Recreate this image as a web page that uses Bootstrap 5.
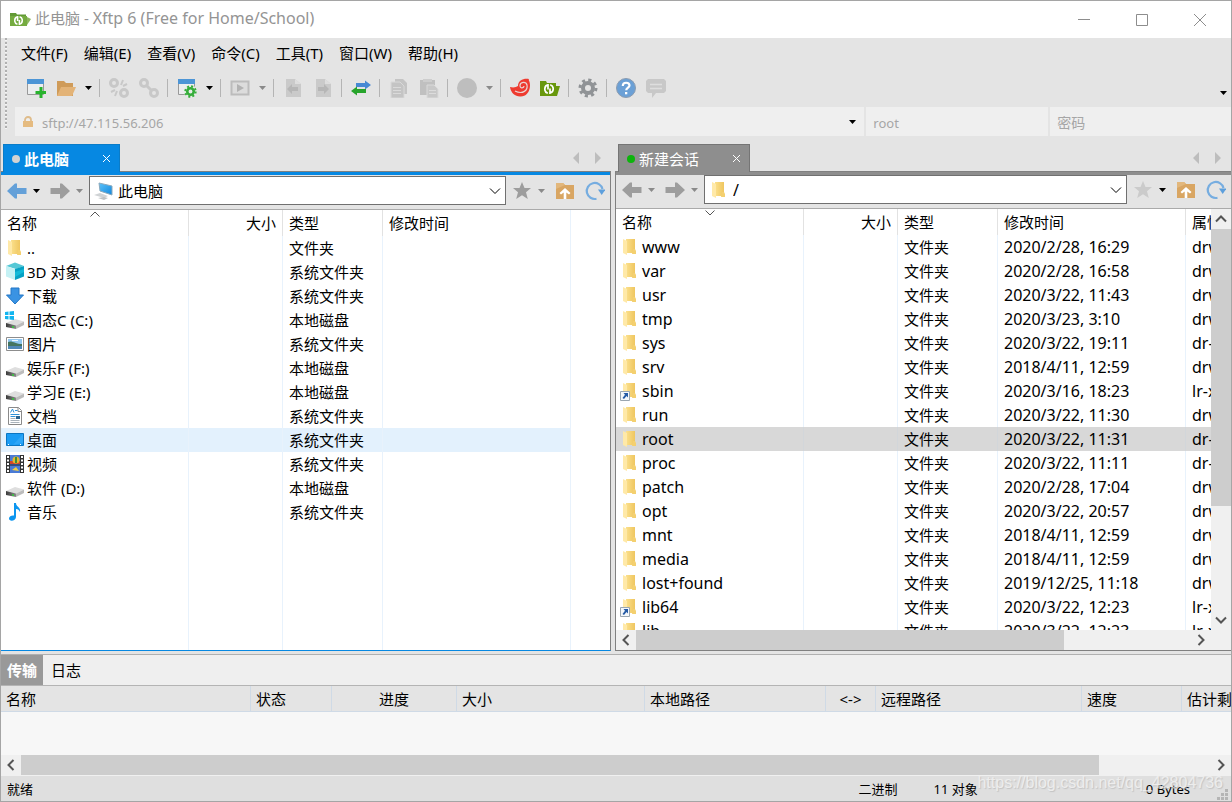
<!DOCTYPE html>
<html lang="zh-CN">
<head>
<meta charset="utf-8">
<meta name="viewport" content="width=device-width, initial-scale=1">
<title>此电脑 - Xftp 6</title>
<link rel="stylesheet" href="https://cdn.jsdelivr.net/npm/bootstrap@5.3.0/dist/css/bootstrap.min.css">
<style>
  body { font: 15px/24px "Noto Sans", "Noto Sans CJK SC", sans-serif; color: #000; background: #e4e4e4; }
  button, input, select { font: inherit; border: 0; background: none; padding: 0; border-radius: 0; }
  svg { display: block; flex: none; }
  .app { border: 1px solid #a5a5a5; }
  .title-bar { height: 37px; background: #fff; color: #949494; padding: 0 2px 0 9px; }
  .win-btn { width: 58px; height: 37px; color: #8d8d8d; }
  .bars { padding-left: 4px; gap: 10px; }
  .grip { width: 2px; margin-bottom: 6px; background: repeating-linear-gradient(#b0b0b0 0 2px, #f4f4f4 2px 3px, transparent 3px 4px); }
  .menus { gap: 16px; height: 30px; padding-left: 4px; }
  .menus a { color: #000; text-decoration: none; }
  .tools { height: 39px; padding-left: 4px; }
  .tool { width: 30px; height: 30px; color: #9d9d9d; }
  .tool.live { color: #64a0d8; }
  .tool.pale { color: #cbcbcb; }
  .drop { width: 15px; height: 30px; color: #000; }
  .drop.off { color: #8a8a8a; }
  .split { width: 8px; height: 18px; background: linear-gradient(90deg, transparent 3px, #b4b4b4 3px 4px, transparent 4px); }
  .quick { gap: 2px; height: 29px; margin-left: -2px; }
  .field { background: #efefef; color: #a6a6a6; padding-left: 7px; font-size: 13px; }
  .field input { outline: 0; color: #a6a6a6; min-width: 0; padding-top: 2px; }
  .field input::placeholder { color: #a6a6a6; opacity: 1; }
  .f-host { flex: 843 1 0; }
  .f-user { flex: 175 1 0; }
  .f-pass { flex: 174 1 0; font-size: 14px; }
  .work { gap: 4px; padding-top: 8px; min-height: 0; }
  .pane { min-width: 0; min-height: 0; }
  .pane-l { flex: 610 1 0; }
  .pane-r { flex: 616 1 0; }
  .tab-strip { height: 27px; padding-left: 2px; }
  .pane-r .tab-strip { padding-left: 3px; }
  .session { height: 28px; color: #fff; padding: 0 9px 0 8px; border: 1px solid #0a7cc8; border-bottom: 0; position: relative; z-index: 1; }
  .pane-l .session { width: 117px; background: #0688e2; font-weight: 700; }
  .pane-r .session { width: 132px; background: #8e8e8e; border-color: #757575; }
  .dot { width: 8px; height: 8px; border-radius: 50%; background: #d3d3d3; margin-right: 4px; }
  .pane-r .dot { background: #0cb40c; }
  .frame { border: 1px solid #808080; min-height: 0; }
  .pane-l .frame { border-bottom-color: #0688e2; border-left: 0; }
  .pane-r .frame { border-right: 0; }
  .stripe { height: 3px; background: #0688e2; }
  .pane-r .stripe { background: #8e8e8e; }
  .path-bar { height: 35px; padding: 0 2px 3px 3px; border-bottom: 1px solid #aaa; gap: 4px; }
  .path-bar .tool { width: 26px; }
  .path-bar .drop { width: 13px; }
  .combo { height: 29px; background: #fff; border: 1px solid #707070; padding: 0 4px; margin: 0 -1px; min-width: 0; }
  .combo select { appearance: none; outline: 0; color: #000; min-width: 0; }
  .list-box { background: #fff; min-height: 0; min-width: 0; overflow: hidden; }
  .files { table-layout: fixed; border-collapse: separate; border-spacing: 0; height: 100%; white-space: nowrap; }
  .pane-l .files { width: 570px; }
  .pane-r .files { width: 100%; }
  .files th, .files td { height: 24px; padding: 0 6px; border-right: 1px solid #e8f2fc; font-weight: 400; overflow: hidden; }
  .files th { height: 26px; padding: 1px 6px; border-right-color: #e2e2e2; position: relative; }
  .files td:first-child { padding: 0 0 0 4px; }
  .files th:last-child, .files td:last-child { border-right-color: #e8f2fc; }
  .files .rest td { height: auto; }
  .files .picked td { background: #e3f1fd; }
  .pane-r .files .picked td { background: #d8d8d8; border-color: #d2d6da; }
  .pane-r td:first-child, .pane-r td:nth-child(n+4) { font-size: 16px; }
  .pane-r .files td:last-child, .pane-r .files th:last-child { border-right: 0; padding-right: 0; text-overflow: clip; }
  .nm { display: flex; align-items: center; gap: 2px; height: 24px; }
  .sort { position: absolute; top: 1px; left: 50%; margin-left: -5px; }
  .v-scroll { width: 20px; background: #f0f0f0; }
  .h-scroll { height: 20px; background: #f0f0f0; }
  .thumb { background: #cdcdcd; }
  .arrow { width: 20px; height: 20px; color: #555; flex: none; }
  .dock { border-top: 1px solid #b0b0b0; margin-top: 3px; }
  .dock-tabs { height: 30px; background: #efefef; }
  .dock-tabs button { padding: 0 6px; }
  .dock-tabs .on { background: #999; color: #fff; font-weight: 700; }
  .queue-box { background: #f7f7f7; height: 70px; border-top: 1px solid #b4b4b4; overflow: hidden; }
  .queue { table-layout: fixed; width: 1300px; border-collapse: separate; border-spacing: 0; white-space: nowrap; }
  .queue th { height: 26px; padding: 0 5px; font-weight: 400; background: #e4e4e4; border-right: 1px solid #cfdae6; border-bottom: 1px solid #cfdae6; }
  .status { height: 26px; background: #dfdfdf; font-size: 13px; padding: 1px 0 0 6px; position: relative; border-top: 1px solid #f0f0f0; }
  .s-gap { width: 36px; }
  .s-wide { width: 168px; }
  .s-end { width: 41px; }
  .mark-text { position: absolute; right: 8px; top: -5px; font: 16px/24px "Liberation Sans", sans-serif; color: #f2f2f2; text-shadow: 1px 1px 1px #b9b9b9; opacity: .75; }
  .sizer { position: absolute; right: 3px; bottom: 1px; }
</style>
</head>
<body>
<svg width="0" height="0" class="position-absolute" aria-hidden="true">
  <defs>
    <linearGradient id="gold"><stop offset="0" stop-color="#fbe08c"/><stop offset="1" stop-color="#efc660"/></linearGradient>
    <linearGradient id="sky" x2="1" y2="1"><stop offset="0" stop-color="#5cc3fb"/><stop offset="1" stop-color="#1287dc"/></linearGradient>
    <linearGradient id="metal" x2="1"><stop offset="0" stop-color="#3c3c3c"/><stop offset="1" stop-color="#8a8a8a"/></linearGradient>
    <symbol id="car" viewBox="0 0 7 4"><path d="M0 0h7L3.500 4z" fill="currentColor"/></symbol>
    <symbol id="dir" viewBox="0 0 20 20"><path d="M6 2h9v14H6z" fill="url(#gold)"/><path d="M13 12h2l1 2v3h-4z" fill="#f4d070"/><path d="M3 2l4 2v14l-4-2z" fill="#ffe9a8"/></symbol>
    <symbol id="dirlink" viewBox="0 0 20 20"><use href="#dir"/><path d="M.5 10.500h9v9h-9z" fill="#f4f7fa" stroke="#9aa6b0"/><path d="M3.500 12H8v4.500L6.500 15 4 18 2.500 17 5 13.700z" fill="#245aa5"/></symbol>
    <symbol id="disk" viewBox="0 0 20 20"><path d="M1 13l9-4 9 2.500-8 4z" fill="#dedede"/><path d="M1 13l10 2.500V19L1 17z" fill="url(#metal)"/><path d="M11 15.500l8-4v3.500l-8 4z" fill="#bcbcbc"/><path d="M7 16l2 .5v1.500L7 17.500z" fill="#31d13a"/></symbol>
    <symbol id="windisk" viewBox="0 0 20 20"><use href="#disk"/><path d="M0 2l3.500-.5V5H0zM4.500 1.400L9 1v4H4.500zM0 6h3.500v3.500L0 9zM4.500 6H9v4l-4.500-.5z" fill="#12b5ef"/></symbol>
    <symbol id="cube" viewBox="0 0 20 20"><path d="M1 4l9-3.500L19 4l-8 3z" fill="#55c8d6"/><path d="M1 4l9 3v11l-9-3.500z" fill="#c5f1f4"/><path d="M10 7l9-3v10.500L10 18z" fill="#06a1c4"/><path d="M10 10l9-3v3l-9 5z" fill="#13bad8"/></symbol>
    <symbol id="down" viewBox="0 0 20 20"><path d="M6 2h8v7h4.500L10 18 1.500 9H6z" fill="#3a93e3" stroke="#2277c7"/></symbol>
    <symbol id="photo" viewBox="0 0 20 20"><path d="M1.500 3.500h17v13h-17z" fill="#fff" stroke="#8d8d8d"/><path d="M3 5h14v10H3z" fill="#8fc6ef"/><path d="M3 8c4-2 7 2 14 2v3H3z" fill="#44745f"/><path d="M3 12h14v3H3z" fill="#4f86b5"/><path d="M7 6h6v1H7z" fill="#eef7fd"/></symbol>
    <symbol id="doc" viewBox="0 0 20 20"><path d="M3.500 1.500h10l3 3v14h-13z" fill="#fff" stroke="#8a8a8a"/><path d="M13 1.500v4h4" fill="none" stroke="#8a8a8a"/><path d="M5.500 6.500l2-3.500 1.500 3.500M10 4.500h2.500M5.500 8.500h9M5.500 10.500h5" stroke="#2d90d8" fill="none"/><path d="M5.500 12.500h5M5.500 14.500h9M5.500 16.500h9" stroke="#a9b2ba"/><path d="M11 10h4v3h-4z" fill="#28638f"/></symbol>
    <symbol id="desk" viewBox="0 0 20 20"><path d="M1.500 3.500h17v12h-17z" fill="#1b9cf4" stroke="#0c76c2"/><path d="M18 4v9L8 15z" fill="#2ea6f7"/><path d="M3 14.500h1M15 14.500h1" stroke="#fff"/></symbol>
    <symbol id="film" viewBox="0 0 20 20"><path d="M1 1h18v18H1z" fill="#333"/><path d="M5 1h10v18H5z" fill="#4a7bd6"/><path d="M5 7h10v3H5z" fill="#d2452a"/><circle cx="11" cy="6" r="3.500" fill="#e6b72d"/><path d="M11 3v6" stroke="#3e8e35" stroke-width="2"/><path d="M5 11h10" stroke="#222"/><path d="M7 16l4-3 3 4z" fill="#f1d044"/><path d="M3 2v17M17 2v17" stroke="#fff" stroke-width="2" stroke-dasharray="2 1.500"/></symbol>
    <symbol id="note" viewBox="0 0 20 20"><path d="M9 1h2c0 4 5 4 4 9-1-2-2-3-4-3v8c0 4-7 5-7 1.500C4 14 7 13 9 13.500z" fill="#0c96f0"/></symbol>
    <symbol id="back" viewBox="0 0 20 20"><path d="M0 10l8-7.500h2V7h9.500v6H10v4.500H8z" fill="currentColor"/></symbol>
    <symbol id="fwd" viewBox="0 0 20 20"><path d="M20 10l-8-7.500h-2V7H.5v6H10v4.500h2z" fill="currentColor"/></symbol>
    <symbol id="star" viewBox="0 0 20 20"><path d="M10 1l2.500 6H19l-5 4.200L15.800 18 10 14.200 4.200 18 6 11.200 1 7h6.500z" fill="currentColor"/></symbol>
    <symbol id="up" viewBox="0 0 20 20"><path d="M1 2h7l2 2h9v14H1z" fill="#d9a663"/><path d="M1 2h7l2 2-9 4z" fill="#e2b77c"/><path d="M10 7l5.500 5-1.500 1.500-2.700-2V18H8.700v-6.500L6 13.500 4.500 12z" fill="#fff"/></symbol>
    <symbol id="again" viewBox="0 0 20 20"><path d="M11.500 17.800A8 8 0 1 1 17.500 8" fill="none" stroke="#76ade0" stroke-width="2.200"/><path d="M13 8.500h7.500l-3.800 5.500z" fill="#5d9fdc"/></symbol>
    <symbol id="gear" viewBox="0 0 20 20"><circle cx="10" cy="10" r="5" fill="none" stroke="currentColor" stroke-width="4"/><circle cx="10" cy="10" r="8" fill="none" stroke="currentColor" stroke-width="3" stroke-dasharray="3.100 3.180"/></symbol>
    <symbol id="swirl" viewBox="0 0 10 10"><path d="M3.800 9.200C-.5 8 0 1.700 4 .9V5.500M6.200.8C10.500 2 10 8.300 6 9.100V4.500" fill="none" stroke="currentColor" stroke-width="1.700"/></symbol>
    <symbol id="chev" viewBox="0 0 12 12"><path d="M1 3.500l5 5 5-5" fill="none" stroke="currentColor"/></symbol>
    <symbol id="sleft" viewBox="0 0 20 20"><path d="M12.500 5L7.500 10l5 5" fill="none" stroke="currentColor" stroke-width="2"/></symbol>
    <symbol id="sright" viewBox="0 0 20 20"><path d="M7.500 5l5 5-5 5" fill="none" stroke="currentColor" stroke-width="2"/></symbol>
    <symbol id="tabnav" viewBox="0 0 30 12"><path d="M6 0v12L0 6zM22 0v12l6-6z" fill="#bdbdbd"/></symbol>
    <symbol id="page" viewBox="0 0 20 20"><path d="M3 1h9l6 5v13H3z" fill="#cacaca"/><path d="M12 1v5h6z" fill="#dedede"/></symbol>
  </defs>
</svg>

<div class="app vh-100 d-flex flex-column overflow-hidden">
  <header class="title-bar d-flex align-items-center">
    <svg width="21" height="20" viewBox="0 0 21 20" class="me-1"><path d="M0 3h6l1 1.500h9V16H0z" fill="#629a35"/><path d="M0 6h17v10H0z" fill="#75ab40"/><path d="M17 7l4 2-4 6z" fill="#8db65e"/><use href="#swirl" x="4" y="6" width="9" height="9" color="#fff"/></svg>
    <span class="pb-1">此电脑 - <span class="fs-6">Xftp 6 (Free for Home/School)</span></span>
    <div class="ms-auto d-flex">
      <button class="win-btn" aria-label="最小化"><svg width="14" height="14" class="mx-auto"><path d="M1 6.500h12" stroke="currentColor"/></svg></button>
      <button class="win-btn" aria-label="最大化"><svg width="14" height="14" class="mx-auto"><path d="M1.500 1.500h11v11h-11z" fill="none" stroke="currentColor"/></svg></button>
      <button class="win-btn" aria-label="关闭"><svg width="14" height="14" class="mx-auto"><path d="M1 1l12 12M13 1L1 13" stroke="currentColor"/></svg></button>
    </div>
  </header>

  <div class="bars d-flex">
    <div class="grip"></div>
    <div class="flex-grow-1">
      <nav class="menus d-flex align-items-center">
        <a href="#">文件(F)</a><a href="#">编辑(E)</a><a href="#">查看(V)</a><a href="#">命令(C)</a><a href="#">工具(T)</a><a href="#">窗口(W)</a><a href="#">帮助(H)</a>
      </nav>
      <div class="tools d-flex align-items-center">
        <button class="tool d-flex align-items-center justify-content-center" aria-label="新建"><svg width="20" height="20"><path d="M1.500 1.500h16v15h-16z" fill="#eceeef" stroke="#999"/><path d="M1 1h17v5H1z" fill="#4c95d6"/><path d="M15 9v11M9.500 14.500h11" stroke="#28b32d" stroke-width="3"/></svg></button>
        <button class="tool d-flex align-items-center justify-content-center" aria-label="打开"><svg width="20" height="20"><path d="M1 3h7l2 2h7v13H1z" fill="#cf9b59"/><path d="M5 9h15l-4 9H1z" fill="#e3b377"/></svg></button>
        <button class="drop d-flex align-items-center justify-content-center" aria-label="打开列表"><svg width="7" height="4"><use href="#car"/></svg></button>
        <span class="split"></span>
        <button class="tool d-flex align-items-center justify-content-center" aria-label="断开"><svg width="20" height="20" fill="none" stroke="#c8c8c8" stroke-width="3"><circle cx="5" cy="5" r="3.500"/><circle cx="15" cy="15" r="3.500"/><path d="M14 2l-2 5M18 6l-4 2M2 14l4-2M6 18l2-5" stroke-width="2"/></svg></button>
        <button class="tool d-flex align-items-center justify-content-center" aria-label="重新连接"><svg width="20" height="20" fill="none" stroke="#c8c8c8" stroke-width="3"><circle cx="5" cy="5" r="3.500"/><circle cx="15" cy="15" r="3.500"/><path d="M7 7l6 6"/></svg></button>
        <span class="split"></span>
        <button class="tool d-flex align-items-center justify-content-center" aria-label="属性"><svg width="20" height="20"><path d="M1.500 1.500h16v15h-16z" fill="#eceeef" stroke="#999"/><path d="M1 1h17v5H1z" fill="#4c95d6"/><circle cx="13.500" cy="13.500" r="6.500" fill="#e6ece6"/><use href="#gear" x="7" y="7" width="13" height="13" color="#35ad3a"/></svg></button>
        <button class="drop d-flex align-items-center justify-content-center" aria-label="属性列表"><svg width="7" height="4"><use href="#car"/></svg></button>
        <span class="split"></span>
        <button class="tool d-flex align-items-center justify-content-center" aria-label="运行"><svg width="20" height="20"><path d="M1.500 3.500h17v13h-17z" fill="#dcdcdc" stroke="#bcbcbc" stroke-width="2"/><path d="M7 6l7 4-7 4z" fill="#b2b2b2"/></svg></button>
        <button class="drop off d-flex align-items-center justify-content-center" aria-label="运行列表"><svg width="7" height="4"><use href="#car"/></svg></button>
        <span class="split"></span>
        <button class="tool d-flex align-items-center justify-content-center" aria-label="下载"><svg width="20" height="20"><use href="#page"/><path d="M4 11l5-5v3h6v4H9v3z" fill="#b6b6b6"/></svg></button>
        <button class="tool d-flex align-items-center justify-content-center" aria-label="上传"><svg width="20" height="20"><use href="#page"/><path d="M16 11l-5-5v3H5v4h6v3z" fill="#b6b6b6"/></svg></button>
        <span class="split"></span>
        <button class="tool d-flex align-items-center justify-content-center" aria-label="同步"><svg width="20" height="20"><path d="M5 5h9V2.500L20 7l-6 4.500V9H5z" fill="#4789d4"/><path d="M15 11H6V8.500L0 13l6 4.500V15h9z" fill="#27a42b"/></svg></button>
        <span class="split"></span>
        <button class="tool d-flex align-items-center justify-content-center" aria-label="复制"><svg width="20" height="20"><path d="M6 1h8l4 4v11H6z" fill="#c4c4c4"/><path d="M2 4h9l4 4v12H2z" fill="#c4c4c4" stroke="#d9d9d9"/><path d="M4 9.500h8M4 12.500h8M4 15.500h8" stroke="#dadada"/></svg></button>
        <button class="tool d-flex align-items-center justify-content-center" aria-label="粘贴"><svg width="20" height="20"><path d="M1 2h15v15H1z" fill="#c0c0c0"/><path d="M4 1h9v3H4z" fill="#cdcdcd"/><path d="M8 7h7l4 4v9H8z" fill="#c8c8c8" stroke="#dadada"/><path d="M10 12.500h7M10 15.500h7" stroke="#dcdcdc"/></svg></button>
        <span class="split"></span>
        <button class="tool d-flex align-items-center justify-content-center" aria-label="编码"><svg width="20" height="20"><circle cx="10" cy="10" r="10" fill="#bebebe"/></svg></button>
        <button class="drop off d-flex align-items-center justify-content-center" aria-label="编码列表"><svg width="7" height="4"><use href="#car"/></svg></button>
        <span class="split"></span>
        <button class="tool d-flex align-items-center justify-content-center" aria-label="Xshell"><svg width="20" height="20"><path d="M0 9c4 1 6 0 8-1 0-6 6-8 11-7-1 1 1 2 1 6 0 8-5 12-10 11.500C5 18.500 1 15 0 9z" fill="#ee3b30"/><path d="M5 13c8 4 13-1 12-6-1-4-7-3-7 .5 0 3.500 4 2.500 4 .5" fill="none" stroke="#e9d5d3" stroke-width="1.200"/></svg></button>
        <button class="tool d-flex align-items-center justify-content-center" aria-label="Xftp"><svg width="20" height="20"><path d="M0 3h6l1 2h9v3h4l-3 10H0z" fill="#68980d"/><use href="#swirl" x="4" y="6" width="10" height="10" color="#fff"/></svg></button>
        <span class="split"></span>
        <button class="tool d-flex align-items-center justify-content-center" aria-label="选项"><svg width="20" height="20" color="#909396"><use href="#gear"/></svg></button>
        <span class="split"></span>
        <button class="tool d-flex align-items-center justify-content-center" aria-label="帮助"><svg width="20" height="20"><circle cx="10" cy="10" r="9.500" fill="#6ba0d6" stroke="#8c9cb0"/><path d="M6.800 8c0-4.500 6.700-4 6.700-.5 0 2-3.300 2.300-3.300 4.800" fill="none" stroke="#fff" stroke-width="2.200"/><path d="M9 14h2.300v2.300H9z" fill="#fff"/></svg></button>
        <button class="tool d-flex align-items-center justify-content-center" aria-label="反馈"><svg width="20" height="20"><path d="M2 1h16l2 2v10l-2 2h-8l-4 5v-5H2l-2-2V3z" fill="#c8c8c8"/><path d="M4 6.500h12M4 10.500h12" stroke="#dedede" stroke-width="1.500"/></svg></button>
        <button class="drop ms-auto d-flex align-items-end justify-content-center" aria-label="更多"><svg width="7" height="4" class="mb-2"><use href="#car"/></svg></button>
      </div>
      <div class="quick d-flex">
        <div class="field f-host d-flex align-items-center">
          <svg width="12" height="12" class="me-2"><path d="M3 6V4a3 3 0 0 1 6 0v2" fill="none" stroke="#dfbc8b" stroke-width="1.800"/><path d="M1 5h10v6H1z" fill="#e5bb80"/></svg>
          <input class="flex-grow-1" type="text" value="sftp://47.115.56.206" aria-label="主机">
          <button class="drop d-flex align-items-center justify-content-center me-1" aria-label="主机列表"><svg width="7" height="4"><use href="#car"/></svg></button>
        </div>
        <div class="field f-user d-flex"><input class="w-100" type="text" value="root" aria-label="用户名"></div>
        <div class="field f-pass d-flex"><input class="w-100" type="password" placeholder="密码" aria-label="密码"></div>
      </div>
    </div>
  </div>

  <main class="work d-flex flex-grow-1">
    <section class="pane pane-l d-flex flex-column">
      <div class="tab-strip d-flex">
        <div class="session d-flex align-items-center"><span class="dot"></span>此电脑<button class="ms-auto text-white" aria-label="关闭标签"><svg width="7" height="7"><path d="M0 0l7 7M7 0L0 7" stroke="currentColor"/></svg></button></div>
        <svg width="30" height="12" class="ms-auto mt-2 me-2"><use href="#tabnav"/></svg>
      </div>
      <div class="frame flex-grow-1 d-flex flex-column">
        <div class="stripe"></div>
        <div class="path-bar d-flex align-items-center">
          <div class="d-flex"><button class="tool live d-flex align-items-center justify-content-center" aria-label="后退"><svg width="20" height="20"><use href="#back"/></svg></button><button class="drop d-flex align-items-center justify-content-center" aria-label="后退列表"><svg width="7" height="4"><use href="#car"/></svg></button></div>
          <div class="d-flex"><button class="tool d-flex align-items-center justify-content-center" aria-label="前进"><svg width="20" height="20"><use href="#fwd"/></svg></button><button class="drop off d-flex align-items-center justify-content-center" aria-label="前进列表"><svg width="7" height="4"><use href="#car"/></svg></button></div>
          <div class="combo d-flex flex-grow-1 align-items-center">
            <svg width="20" height="20" class="me-1"><path d="M5 2l13 3v9L6 10z" fill="url(#sky)" stroke="#8ba9bd"/><path d="M0 14l6-2 8 3-4 2z" fill="#d0d3d5"/><path d="M4 17l6-1 4 1-4 2z" fill="#bdc1c4"/></svg>
            <select class="flex-grow-1" aria-label="本地路径"><option>此电脑</option></select>
            <svg width="12" height="12"><use href="#chev"/></svg>
          </div>
          <div class="d-flex"><button class="tool d-flex align-items-center justify-content-center" aria-label="收藏"><svg width="20" height="20"><use href="#star"/></svg></button><button class="drop off d-flex align-items-center justify-content-center" aria-label="收藏列表"><svg width="7" height="4"><use href="#car"/></svg></button></div>
          <button class="tool d-flex align-items-center justify-content-center" aria-label="上一级"><svg width="20" height="20"><use href="#up"/></svg></button>
          <button class="tool d-flex align-items-center justify-content-center" aria-label="刷新"><svg width="20" height="20" overflow="visible"><use href="#again"/></svg></button>
        </div>
        <div class="list-box flex-grow-1">
          <table class="files">
            <colgroup><col style="width:188px"><col style="width:94px"><col style="width:100px"><col style="width:188px"></colgroup>
            <thead><tr><th>名称<svg class="sort" width="10" height="6"><path d="M.5 5.500L5 1l4.500 4.500" fill="none" stroke="#555"/></svg></th><th class="text-end">大小</th><th>类型</th><th>修改时间</th></tr></thead>
            <tbody>
              <tr><td><span class="nm"><svg width="20" height="20"><use href="#dir"/></svg>..</span></td><td></td><td>文件夹</td><td></td></tr>
              <tr><td><span class="nm"><svg width="20" height="20"><use href="#cube"/></svg>3D 对象</span></td><td></td><td>系统文件夹</td><td></td></tr>
              <tr><td><span class="nm"><svg width="20" height="20"><use href="#down"/></svg>下载</span></td><td></td><td>系统文件夹</td><td></td></tr>
              <tr><td><span class="nm"><svg width="20" height="20"><use href="#windisk"/></svg>固态C (C:)</span></td><td></td><td>本地磁盘</td><td></td></tr>
              <tr><td><span class="nm"><svg width="20" height="20"><use href="#photo"/></svg>图片</span></td><td></td><td>系统文件夹</td><td></td></tr>
              <tr><td><span class="nm"><svg width="20" height="20"><use href="#disk"/></svg>娱乐F (F:)</span></td><td></td><td>本地磁盘</td><td></td></tr>
              <tr><td><span class="nm"><svg width="20" height="20"><use href="#disk"/></svg>学习E (E:)</span></td><td></td><td>本地磁盘</td><td></td></tr>
              <tr><td><span class="nm"><svg width="20" height="20"><use href="#doc"/></svg>文档</span></td><td></td><td>系统文件夹</td><td></td></tr>
              <tr class="picked"><td><span class="nm"><svg width="20" height="20"><use href="#desk"/></svg>桌面</span></td><td></td><td>系统文件夹</td><td></td></tr>
              <tr><td><span class="nm"><svg width="20" height="20"><use href="#film"/></svg>视频</span></td><td></td><td>系统文件夹</td><td></td></tr>
              <tr><td><span class="nm"><svg width="20" height="20"><use href="#disk"/></svg>软件 (D:)</span></td><td></td><td>本地磁盘</td><td></td></tr>
              <tr><td><span class="nm"><svg width="20" height="20"><use href="#note"/></svg>音乐</span></td><td></td><td>系统文件夹</td><td></td></tr>
              <tr class="rest"><td></td><td></td><td></td><td></td></tr>
            </tbody>
          </table>
        </div>
      </div>
    </section>

    <section class="pane pane-r d-flex flex-column">
      <div class="tab-strip d-flex">
        <div class="session d-flex align-items-center"><span class="dot"></span>新建会话<button class="ms-auto text-white" aria-label="关闭标签"><svg width="7" height="7"><path d="M0 0l7 7M7 0L0 7" stroke="currentColor"/></svg></button></div>
        <svg width="30" height="12" class="ms-auto mt-2 me-2"><use href="#tabnav"/></svg>
      </div>
      <div class="frame flex-grow-1 d-flex flex-column">
        <div class="stripe"></div>
        <div class="path-bar d-flex align-items-center">
          <div class="d-flex"><button class="tool d-flex align-items-center justify-content-center" aria-label="后退"><svg width="20" height="20"><use href="#back"/></svg></button><button class="drop off d-flex align-items-center justify-content-center" aria-label="后退列表"><svg width="7" height="4"><use href="#car"/></svg></button></div>
          <div class="d-flex"><button class="tool d-flex align-items-center justify-content-center" aria-label="前进"><svg width="20" height="20"><use href="#fwd"/></svg></button><button class="drop off d-flex align-items-center justify-content-center" aria-label="前进列表"><svg width="7" height="4"><use href="#car"/></svg></button></div>
          <div class="combo d-flex flex-grow-1 align-items-center">
            <svg width="20" height="20" class="me-1"><use href="#dir"/></svg>
            <select class="flex-grow-1 fs-6" aria-label="远程路径"><option>/</option></select>
            <svg width="12" height="12"><use href="#chev"/></svg>
          </div>
          <div class="d-flex"><button class="tool pale d-flex align-items-center justify-content-center" aria-label="收藏"><svg width="20" height="20"><use href="#star"/></svg></button><button class="drop d-flex align-items-center justify-content-center" aria-label="收藏列表"><svg width="7" height="4"><use href="#car"/></svg></button></div>
          <button class="tool d-flex align-items-center justify-content-center" aria-label="上一级"><svg width="20" height="20"><use href="#up"/></svg></button>
          <button class="tool d-flex align-items-center justify-content-center" aria-label="刷新"><svg width="20" height="20" overflow="visible"><use href="#again"/></svg></button>
        </div>
        <div class="d-flex flex-grow-1" style="min-height:0">
          <div class="list-box flex-grow-1">
            <table class="files">
              <colgroup><col style="width:188px"><col style="width:94px"><col style="width:100px"><col style="width:188px"><col></colgroup>
              <thead><tr><th>名称<svg class="sort" width="10" height="6"><path d="M.5 .5L5 5l4.500-4.500" fill="none" stroke="#555"/></svg></th><th class="text-end">大小</th><th>类型</th><th>修改时间</th><th>属性</th></tr></thead>
              <tbody>
                <tr><td><span class="nm"><svg width="20" height="20"><use href="#dir"/></svg>www</span></td><td></td><td>文件夹</td><td>2020/2/28, 16:29</td><td>drwxr-xr-x</td></tr>
                <tr><td><span class="nm"><svg width="20" height="20"><use href="#dir"/></svg>var</span></td><td></td><td>文件夹</td><td>2020/2/28, 16:58</td><td>drwxr-xr-x</td></tr>
                <tr><td><span class="nm"><svg width="20" height="20"><use href="#dir"/></svg>usr</span></td><td></td><td>文件夹</td><td>2020/3/22, 11:43</td><td>drwxr-xr-x</td></tr>
                <tr><td><span class="nm"><svg width="20" height="20"><use href="#dir"/></svg>tmp</span></td><td></td><td>文件夹</td><td>2020/3/23, 3:10</td><td>drwxrwxrwt</td></tr>
                <tr><td><span class="nm"><svg width="20" height="20"><use href="#dir"/></svg>sys</span></td><td></td><td>文件夹</td><td>2020/3/22, 19:11</td><td>dr-xr-xr-x</td></tr>
                <tr><td><span class="nm"><svg width="20" height="20"><use href="#dir"/></svg>srv</span></td><td></td><td>文件夹</td><td>2018/4/11, 12:59</td><td>drwxr-xr-x</td></tr>
                <tr><td><span class="nm"><svg width="20" height="20"><use href="#dirlink"/></svg>sbin</span></td><td></td><td>文件夹</td><td>2020/3/16, 18:23</td><td>lr-xr-xr-x</td></tr>
                <tr><td><span class="nm"><svg width="20" height="20"><use href="#dir"/></svg>run</span></td><td></td><td>文件夹</td><td>2020/3/22, 11:30</td><td>drwxr-xr-x</td></tr>
                <tr class="picked"><td><span class="nm"><svg width="20" height="20"><use href="#dir"/></svg>root</span></td><td></td><td>文件夹</td><td>2020/3/22, 11:31</td><td>dr-xr-x---</td></tr>
                <tr><td><span class="nm"><svg width="20" height="20"><use href="#dir"/></svg>proc</span></td><td></td><td>文件夹</td><td>2020/3/22, 11:11</td><td>dr-xr-xr-x</td></tr>
                <tr><td><span class="nm"><svg width="20" height="20"><use href="#dir"/></svg>patch</span></td><td></td><td>文件夹</td><td>2020/2/28, 17:04</td><td>drwxr-xr-x</td></tr>
                <tr><td><span class="nm"><svg width="20" height="20"><use href="#dir"/></svg>opt</span></td><td></td><td>文件夹</td><td>2020/3/22, 20:57</td><td>drwxr-xr-x</td></tr>
                <tr><td><span class="nm"><svg width="20" height="20"><use href="#dir"/></svg>mnt</span></td><td></td><td>文件夹</td><td>2018/4/11, 12:59</td><td>drwxr-xr-x</td></tr>
                <tr><td><span class="nm"><svg width="20" height="20"><use href="#dir"/></svg>media</span></td><td></td><td>文件夹</td><td>2018/4/11, 12:59</td><td>drwxr-xr-x</td></tr>
                <tr><td><span class="nm"><svg width="20" height="20"><use href="#dir"/></svg>lost+found</span></td><td></td><td>文件夹</td><td>2019/12/25, 11:18</td><td>drwx------</td></tr>
                <tr><td><span class="nm"><svg width="20" height="20"><use href="#dirlink"/></svg>lib64</span></td><td></td><td>文件夹</td><td>2020/3/22, 12:23</td><td>lr-xr-xr-x</td></tr>
                <tr><td><span class="nm"><svg width="20" height="20"><use href="#dirlink"/></svg>lib</span></td><td></td><td>文件夹</td><td>2020/3/22, 12:23</td><td>lr-xr-xr-x</td></tr>
              </tbody>
            </table>
          </div>
          <div class="v-scroll d-flex flex-column flex-shrink-0">
            <svg class="arrow" viewBox="0 0 20 20"><path d="M5 12.500l5-5 5 5" fill="none" stroke="currentColor" stroke-width="2"/></svg>
            <div class="thumb" style="flex:274 1 0"></div><div style="flex:103 1 0"></div>
            <svg class="arrow" viewBox="0 0 20 20"><path d="M5 7.500l5 5 5-5" fill="none" stroke="currentColor" stroke-width="2"/></svg>
          </div>
        </div>
        <div class="h-scroll d-flex">
          <svg class="arrow"><use href="#sleft"/></svg>
          <div class="thumb" style="flex:426 1 0"></div><div style="flex:127 1 0"></div>
          <svg class="arrow"><use href="#sright"/></svg><span class="arrow"></span>
        </div>
      </div>
    </section>
  </main>

  <section class="dock">
    <div class="dock-tabs d-flex"><button class="on">传输</button><button class="ps-2">日志</button></div>
    <div class="queue-box">
      <table class="queue">
        <colgroup><col style="width:250px"><col style="width:81px"><col style="width:125px"><col style="width:188px"><col style="width:181px"><col style="width:50px"><col style="width:206px"><col style="width:100px"><col></colgroup>
        <thead><tr><th>名称</th><th>状态</th><th class="text-center">进度</th><th>大小</th><th>本地路径</th><th class="text-center">&lt;-&gt;</th><th>远程路径</th><th>速度</th><th>估计剩余时间</th></tr></thead>
      </table>
    </div>
    <div class="h-scroll d-flex">
      <svg class="arrow"><use href="#sleft"/></svg>
      <div class="thumb" style="flex:1077 1 0"></div><div style="flex:112 1 0"></div>
      <svg class="arrow"><use href="#sright"/></svg>
    </div>
  </section>
  <footer class="status d-flex">
    <span>就绪</span><span class="ms-auto">二进制</span><span class="s-gap"></span><span>11 对象</span><span class="s-wide"></span><span>0 Bytes</span><span class="s-end"></span>
    <span class="mark-text">https://blog.csdn.net/qq_42804736</span>
    <svg class="sizer" width="11" height="11" fill="#b5b5b5"><path d="M8 0h3v3H8zM4 4h3v3H4zM8 4h3v3H8zM0 8h3v3H0zM4 8h3v3H4zM8 8h3v3H8z"/></svg>
  </footer>
</div>
<script src="https://cdn.jsdelivr.net/npm/bootstrap@5.3.0/dist/js/bootstrap.bundle.min.js"></script>
</body>
</html>
